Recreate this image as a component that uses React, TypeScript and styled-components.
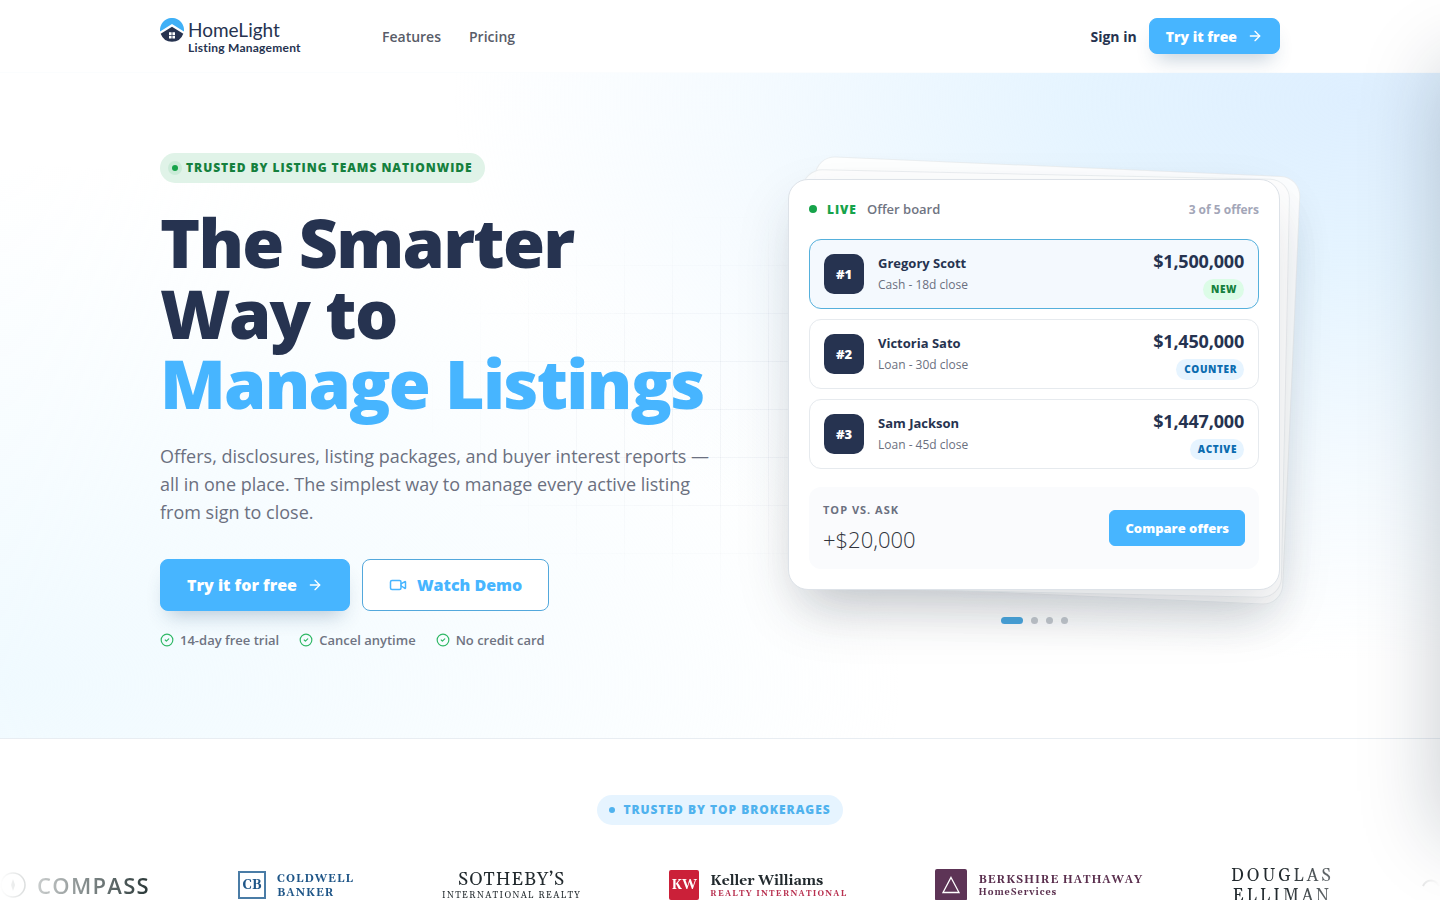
import React from "react";
import styled, { createGlobalStyle, css } from "styled-components";
import { ArrowRight, CircleCheck, Video } from "lucide-react";

const navy = "#263350";
const blue = "#47b5ff";
const serif = `Georgia, Gelasio, "Liberation Serif", serif`;

const GlobalStyle = createGlobalStyle`
  *, *::before, *::after { box-sizing: border-box; }
  body {
    margin: 0;
    background: #fff;
    color: ${navy};
    font-family: "Open Sans", "Noto Sans", sans-serif;
    overflow-x: hidden;
  }
  a { color: inherit; text-decoration: none; }
  button { font-family: inherit; cursor: pointer; }
  h1, p, ul { margin: 0; padding: 0; }
  ul { list-style: none; }
  html { scrollbar-width: none; }
`;

const Container = styled.div`
  max-width: 1168px;
  margin: 0 auto;
  padding: 0 24px;
`;

const Header = styled.header`
  background: #fff;
  border-bottom: 1px solid #fbfdfe;
`;

const HeaderRow = styled(Container)`
  display: flex;
  align-items: center;
  height: 72px;
`;

const Brand = styled.a`
  display: flex;
  gap: 4px;
  align-items: flex-start;
  width: 142px;
  height: 36px;
`;

const BrandText = styled.span`
  display: flex;
  flex-direction: column;
  font-family: Lato, sans-serif;
  white-space: nowrap;
`;

const BrandName = styled.span`
  font-size: 19px;
  line-height: 24px;
`;

const BrandSub = styled.span`
  font-size: 12px;
  line-height: 12px;
  font-weight: 700;
  letter-spacing: 0.02em;
`;

const Nav = styled.nav`
  display: flex;
  gap: 28px;
  margin-left: 80px;
  font-size: 14px;
  font-weight: 600;
  color: #585c68;
`;

const HeaderActions = styled.div`
  display: flex;
  align-items: center;
  gap: 12px;
  margin-left: auto;
  font-size: 14px;
  font-weight: 700;
`;

const Button = styled.button<{ $size: "sm" | "lg"; $outline?: boolean; $flat?: boolean }>`
  display: inline-flex;
  align-items: center;
  justify-content: center;
  border: 1px solid ${blue};
  background: ${blue};
  color: #fff;
  font-weight: 800;
  white-space: nowrap;
  box-shadow: 0 12px 20px -8px rgba(38, 80, 120, 0.3);
  ${(p) =>
    p.$size === "lg"
      ? css`height: 52px; padding: 0 26px; gap: 10px; font-size: 16px; border-radius: 8px;`
      : css`height: 36px; padding: 0 16px; gap: 10px; font-size: 14px; border-radius: 8px;`}
  ${(p) => p.$outline && css`background: #fff; color: ${blue}; border-color: #53a8dc; box-shadow: none;`}
  ${(p) => p.$flat && css`box-shadow: none; font-size: 13px; padding: 0 15px; border-radius: 6px;`}
`;

const Hero = styled.section`
  position: relative;
  border-bottom: 1px solid #e8edf2;
  background:
    radial-gradient(ellipse 900px 560px at 94% 4%, #deefff 0%, rgba(222, 241, 255, 0.78) 30%, rgba(222, 241, 255, 0.3) 68%, rgba(222, 241, 255, 0) 100%),
    radial-gradient(ellipse 900px 520px at 0% 92%, #f0faff 0%, rgba(240, 250, 255, 0) 100%),
    #fff;
`;

const HeroGrid = styled(Container)`
  position: relative;
  display: grid;
  grid-template-columns: minmax(0, 1fr) 492px;
  gap: 72px;
  padding-top: 80px;
  padding-bottom: 88px;
`;

const GridLines = styled.div`
  position: absolute;
  inset: 0;
  pointer-events: none;
  background-image:
    linear-gradient(to right, rgba(40, 60, 100, 0.045) 1px, transparent 1px),
    linear-gradient(to bottom, rgba(40, 60, 100, 0.045) 1px, transparent 1px);
  background-size: 48px 48px;
  mask-image: radial-gradient(ellipse 300px 195px at 50% 50%, #000 30%, transparent 100%);
`;

const Copy = styled.div`
  display: flex;
  flex-direction: column;
  align-items: flex-start;
`;

const Pill = styled.span<{ $tone: "green" | "blue" }>`
  display: inline-flex;
  align-items: center;
  gap: 8px;
  height: 30px;
  padding: 0 12px;
  border-radius: 15px;
  font-size: 12px;
  line-height: 16px;
  font-weight: 800;
  letter-spacing: 0.08em;
  ${(p) =>
    p.$tone === "green"
      ? css`background: #e0f3e8; color: #15803d;`
      : css`background: #e6f4ff; color: #4fb2ee;`}
`;

const Dot = styled.i<{ $size: number; $color: string; $halo?: boolean }>`
  width: ${(p) => p.$size}px;
  height: ${(p) => p.$size}px;
  border-radius: 50%;
  background: ${(p) => p.$color};
  box-shadow: ${(p) => (p.$halo ? "0 0 0 4px rgba(22, 163, 74, 0.1)" : "none")};
`;

const Title = styled.h1`
  margin-top: 24px;
  font-size: 68px;
  line-height: 1.04;
  font-weight: 800;
  letter-spacing: -0.025em;
  color: ${navy};
  span { display: block; white-space: nowrap; }
  span:last-child { color: ${blue}; }
`;

const Lead = styled.p`
  margin-top: 23px;
  font-size: 18px;
  line-height: 28px;
  color: #6b7080;
`;

const CtaRow = styled.div`
  display: flex;
  gap: 12px;
  margin-top: 33px;
`;

const Perks = styled.ul`
  display: flex;
  gap: 20px;
  margin-top: 19px;
`;

const Perk = styled.li`
  display: flex;
  align-items: center;
  gap: 6px;
  font-size: 13px;
  line-height: 20px;
  font-weight: 600;
  color: #6f7482;
  svg { color: #2fb865; }
`;

const Showcase = styled.div`
  display: flex;
  flex-direction: column;
  align-items: center;
  padding-top: 26px;
`;

const Stack = styled.div`
  position: relative;
  width: 100%;
`;

const BackCard = styled.div<{ $far?: boolean }>`
  position: absolute;
  inset: ${(p) => (p.$far ? "-10px 0 -8px 6px" : "-4px 0 -4px 4px")};
  border: 1px solid rgba(200, 208, 216, 0.35);
  border-radius: 20px;
  background: rgba(255, 255, 255, 0.9);
  box-shadow: 0 24px 48px -12px rgba(38, 51, 65, 0.08);
  transform: ${(p) => (p.$far ? "translate(12px, -3px) rotate(2.5deg)" : "translate(6px, -1px) rotate(1.2deg)")};
`;

const Board = styled.article`
  position: relative;
  padding: 19px 20px 20px;
  border: 1px solid #dde2e8;
  border-radius: 20px;
  background: #fff;
  box-shadow: 0 24px 60px -8px rgba(38, 51, 65, 0.18);
`;

const BoardHead = styled.div`
  display: flex;
  align-items: center;
  gap: 10px;
  height: 20px;
  margin-bottom: 20px;
  font-size: 13px;
  font-weight: 600;
  color: #6f7482;
`;

const Live = styled.strong`
  font-size: 12px;
  font-weight: 800;
  letter-spacing: 0.08em;
  color: #16a34a;
`;

const Count = styled.span`
  margin-left: auto;
  font-size: 12px;
  font-weight: 700;
  color: #a3a6b8;
`;

const OfferList = styled.ul`
  display: grid;
  gap: 10px;
`;

const Offer = styled.li<{ $active?: boolean }>`
  display: flex;
  align-items: center;
  gap: 14px;
  height: 70px;
  padding: 0 14px;
  border: 1px solid ${(p) => (p.$active ? "#55b0dc" : "#e6eaee")};
  border-radius: 12px;
  background: ${(p) => (p.$active ? "#f4f9fe" : "#fff")};
`;

const Rank = styled.span`
  display: grid;
  place-items: center;
  width: 40px;
  height: 40px;
  border-radius: 10px;
  background: ${navy};
  color: #fff;
  font-size: 13px;
  font-weight: 800;
`;

const Buyer = styled.div`
  display: grid;
  gap: 2px;
  font-size: 12px;
  line-height: 20px;
  color: #6b7080;
  strong { font-size: 13px; font-weight: 700; color: ${navy}; }
`;

const Amount = styled.div`
  display: grid;
  justify-items: end;
  gap: 6px;
  margin-left: auto;
  font-size: 18px;
  line-height: 24px;
  font-weight: 700;
  letter-spacing: -0.01em;
`;

const Tag = styled.span<{ $green?: boolean }>`
  height: 21px;
  padding: 0 7px 0 8px;
  border-radius: 11px;
  font-size: 10px;
  line-height: 21px;
  font-weight: 800;
  letter-spacing: 0.06em;
  background: ${(p) => (p.$green ? "#dcfce7" : "#e6f4ff")};
  color: ${(p) => (p.$green ? "#15803d" : "#0b6cb0")};
`;

const Summary = styled.div`
  display: flex;
  align-items: center;
  justify-content: space-between;
  height: 82px;
  margin-top: 18px;
  padding: 0 14px;
  border-radius: 12px;
  background: #fafbfd;
`;

const Metric = styled.div`
  display: grid;
  gap: 6px;
  font-size: 22px;
  line-height: 30px;
  font-weight: 300;
  color: #30343c;
  small {
    font-size: 11px;
    line-height: 16px;
    font-weight: 700;
    letter-spacing: 1px;
    color: #6b7080;
  }
`;

const Pager = styled.div`
  display: flex;
  gap: 8px;
  margin-top: 27px;
`;

const Page = styled.button<{ $on?: boolean }>`
  width: ${(p) => (p.$on ? 22 : 7)}px;
  height: 7px;
  padding: 0;
  border: 0;
  border-radius: 4px;
  background: ${(p) => (p.$on ? "#4ba8e0" : "#c5c9cf")};
`;

const Trusted = styled.section`
  display: flex;
  flex-direction: column;
  align-items: center;
  padding-top: 56px;
`;

const Marquee = styled.div`
  position: relative;
  width: 100%;
  height: 76px;
  margin-top: 30px;
  overflow: hidden;
  mask-image: linear-gradient(to right, transparent, #000 11%, #000 89%, transparent);
`;

const Track = styled.div`
  display: flex;
  align-items: center;
  gap: 88px;
  width: max-content;
  height: 60px;
`;

const Logo = styled.div<{ $color: string }>`
  display: flex;
  align-items: center;
  gap: 11px;
  color: ${(p) => p.$color};
  white-space: nowrap;
`;

const LogoText = styled.div<{ $center?: boolean }>`
  display: flex;
  flex-direction: column;
  align-items: ${(p) => (p.$center ? "center" : "flex-start")};
  padding-top: 2px;
  font-family: ${serif};
`;

const Line = styled.span<{ $size: number; $lh: number; $bold?: boolean; $track?: string; $color?: string }>`
  font-size: ${(p) => p.$size}px;
  line-height: ${(p) => p.$lh}px;
  font-weight: ${(p) => (p.$bold ? 700 : 400)};
  letter-spacing: ${(p) => p.$track ?? "normal"};
  color: ${(p) => p.$color ?? "inherit"};
`;

const CompassWord = styled.span`
  font-size: 22px;
  font-weight: 600;
  letter-spacing: 0.06em;
`;

const Mark = styled.span<{ $size: number; $fill?: string }>`
  display: grid;
  place-items: center;
  width: ${(p) => p.$size}px;
  height: ${(p) => p.$size}px;
  border: 2px solid ${(p) => p.$fill ?? "#4a7ca6"};
  border-radius: ${(p) => (p.$fill ? 2 : 0)}px;
  background: ${(p) => p.$fill ?? "#fff"};
  color: ${(p) => (p.$fill ? "#fff" : "inherit")};
  font-family: ${serif};
  font-size: 13px;
  font-weight: 700;
`;

const DrawerShadow = styled.div`
  position: fixed;
  top: 64px;
  bottom: 64px;
  left: 100%;
  width: 400px;
  box-shadow: 0 0 76px 0 rgba(15, 30, 50, 0.23);
  pointer-events: none;
`;

const offers = [
  { rank: "#1", name: "Gregory Scott", terms: "Cash - 18d close", price: "$1,500,000", tag: "NEW" },
  { rank: "#2", name: "Victoria Sato", terms: "Loan - 30d close", price: "$1,450,000", tag: "COUNTER" },
  { rank: "#3", name: "Sam Jackson", terms: "Loan - 45d close", price: "$1,447,000", tag: "ACTIVE" },
];

const HouseMark = () => (
  <svg width="24" height="24" viewBox="0 0 24 24" aria-hidden="true">
    <path d="M.1 13.5A12 12 0 1 1 23.9 13.5L12 6Z" fill="#3fb0f7" />
    <path d="M.7 15.8 12 8.8l11.3 7A12 12 0 0 1 .7 15.8Z" fill={navy} />
    <path d="M9 14.2h2.6v2.8H9zM12.4 14.2H15V17h-2.6zM9 17.8h2.6v2.8H9zM12.4 17.8H15v2.8h-2.6z" fill="#fff" />
  </svg>
);

export default function App() {
  return (
    <>
      <GlobalStyle />
      <Header>
        <HeaderRow>
          <Brand href="#">
            <HouseMark />
            <BrandText>
              <BrandName>HomeLight</BrandName>
              <BrandSub>Listing Management</BrandSub>
            </BrandText>
          </Brand>
          <Nav>
            <a href="#features">Features</a>
            <a href="#pricing">Pricing</a>
          </Nav>
          <HeaderActions>
            <a href="#signin">Sign in</a>
            <Button $size="sm">
              Try it free <ArrowRight size={16} />
            </Button>
          </HeaderActions>
        </HeaderRow>
      </Header>

      <Hero>
        <GridLines />
        <HeroGrid>
          <Copy>
            <Pill $tone="green">
              <Dot $size={6} $color="#16a34a" $halo />
              TRUSTED BY LISTING TEAMS NATIONWIDE
            </Pill>
            <Title>
              <span>The Smarter</span>
              <span>Way to</span>
              <span>Manage Listings</span>
            </Title>
            <Lead>
              Offers, disclosures, listing packages, and buyer interest reports — all in one place. The
              simplest way to manage every active listing from sign to close.
            </Lead>
            <CtaRow>
              <Button $size="lg">
                Try it for free <ArrowRight size={16} />
              </Button>
              <Button $size="lg" $outline>
                <Video size={18} /> Watch Demo
              </Button>
            </CtaRow>
            <Perks>
              {["14-day free trial", "Cancel anytime", "No credit card"].map((perk) => (
                <Perk key={perk}>
                  <CircleCheck size={14} />
                  {perk}
                </Perk>
              ))}
            </Perks>
          </Copy>

          <Showcase>
            <Stack>
              <BackCard $far />
              <BackCard />
              <Board>
                <BoardHead>
                  <Dot $size={8} $color="#16a34a" />
                  <Live>LIVE</Live>
                  Offer board
                  <Count>3 of 5 offers</Count>
                </BoardHead>
                <OfferList>
                  {offers.map((o, i) => (
                    <Offer key={o.rank} $active={i === 0}>
                      <Rank>{o.rank}</Rank>
                      <Buyer>
                        <strong>{o.name}</strong>
                        {o.terms}
                      </Buyer>
                      <Amount>
                        {o.price}
                        <Tag $green={i === 0}>{o.tag}</Tag>
                      </Amount>
                    </Offer>
                  ))}
                </OfferList>
                <Summary>
                  <Metric>
                    <small>TOP VS. ASK</small>
                    +$20,000
                  </Metric>
                  <Button $size="sm" $flat>
                    Compare offers
                  </Button>
                </Summary>
              </Board>
            </Stack>
            <Pager>
              <Page $on aria-label="Slide 1" />
              <Page aria-label="Slide 2" />
              <Page aria-label="Slide 3" />
              <Page aria-label="Slide 4" />
            </Pager>
          </Showcase>
        </HeroGrid>
      </Hero>

      <Trusted>
        <Pill $tone="blue">
          <Dot $size={6} $color="#4fb2ee" />
          TRUSTED BY TOP BROKERAGES
        </Pill>
        <Marquee>
          <Track>
            <Logo $color="#1c2b2b">
              <svg width="26" height="26" viewBox="0 0 26 26" fill="none" stroke="currentColor" aria-hidden="true">
                <circle cx="13" cy="13" r="12" strokeWidth="1.5" />
                <path d="M13 7l2 6-2 6-2-6z" fill="currentColor" stroke="none" />
              </svg>
              <CompassWord>COMPASS</CompassWord>
            </Logo>
            <Logo $color="#1f5688">
              <Mark $size={28}>CB</Mark>
              <LogoText>
                <Line $size={11} $lh={14} $bold $track="1px">COLDWELL</Line>
                <Line $size={11} $lh={14} $bold $track="1px">BANKER</Line>
              </LogoText>
            </Logo>
            <Logo $color="#222a2e">
              <LogoText $center>
                <Line $size={18} $lh={20} $track="1px">SOTHEBY’S</Line>
                <Line $size={9} $lh={12} $track="0.15em">INTERNATIONAL REALTY</Line>
              </LogoText>
            </Logo>
            <Logo $color="#222a2e">
              <Mark $size={30} $fill="#cb2039">KW</Mark>
              <LogoText>
                <Line $size={14} $lh={16} $bold>Keller Williams</Line>
                <Line $size={8} $lh={10} $bold $track="0.16em" $color="#b8304f">REALTY INTERNATIONAL</Line>
              </LogoText>
            </Logo>
            <Logo $color="#5a2f4e">
              <Mark $size={32} $fill="#5d3456">
                <svg width="20" height="18" viewBox="0 0 20 18" fill="none" stroke="#fff" strokeWidth="1.3" aria-hidden="true">
                  <path d="M10 1.5 18 16.5H2z" />
                </svg>
              </Mark>
              <LogoText>
                <Line $size={11} $lh={14} $bold $track="0.08em">BERKSHIRE HATHAWAY</Line>
                <Line $size={9} $lh={12} $bold $track="1px">HomeServices</Line>
              </LogoText>
            </Logo>
            <Logo $color="#222a2e">
              <LogoText $center>
                <Line $size={17} $lh={20} $track="3px">DOUGLAS</Line>
                <Line $size={17} $lh={20} $track="3px">ELLIMAN</Line>
              </LogoText>
            </Logo>
            <Logo $color="#222a2e">
              <svg width="18" height="12" viewBox="0 0 18 12" fill="none" stroke="currentColor" strokeWidth="2" aria-hidden="true">
                <path d="M1 7C3 3 6 1.5 9 1.5S15 3 17 7" />
              </svg>
            </Logo>
          </Track>
        </Marquee>
      </Trusted>
      <DrawerShadow />
    </>
  );
}
